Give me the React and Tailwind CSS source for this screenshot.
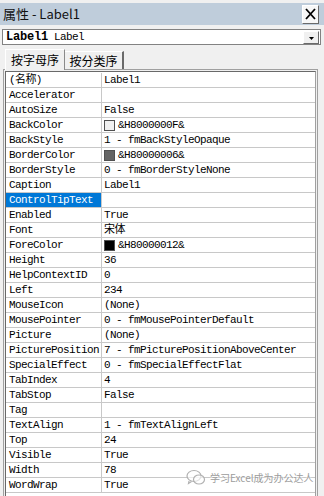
import React from 'react';

const mono = { fontFamily: '"Liberation Mono", "Noto Sans CJK SC", monospace' };

const rows = [
    { name: '(名称)', value: 'Label1' },
    { name: 'Accelerator', value: '' },
    { name: 'AutoSize', value: 'False' },
    { name: 'BackColor', value: '&H8000000F&', swatch: 'bg-[#f0f0f0]' },
    { name: 'BackStyle', value: '1 - fmBackStyleOpaque' },
    { name: 'BorderColor', value: '&H80000006&', swatch: 'bg-[#646464]' },
    { name: 'BorderStyle', value: '0 - fmBorderStyleNone' },
    { name: 'Caption', value: 'Label1' },
    { name: 'ControlTipText', value: '', selected: true },
    { name: 'Enabled', value: 'True' },
    { name: 'Font', value: '宋体' },
    { name: 'ForeColor', value: '&H80000012&', swatch: 'bg-black' },
    { name: 'Height', value: '36' },
    { name: 'HelpContextID', value: '0' },
    { name: 'Left', value: '234' },
    { name: 'MouseIcon', value: '(None)' },
    { name: 'MousePointer', value: '0 - fmMousePointerDefault' },
    { name: 'Picture', value: '(None)' },
    { name: 'PicturePosition', value: '7 - fmPicturePositionAboveCenter' },
    { name: 'SpecialEffect', value: '0 - fmSpecialEffectFlat' },
    { name: 'TabIndex', value: '4' },
    { name: 'TabStop', value: 'False' },
    { name: 'Tag', value: '' },
    { name: 'TextAlign', value: '1 - fmTextAlignLeft' },
    { name: 'Top', value: '24' },
    { name: 'Visible', value: 'True' },
    { name: 'Width', value: '78' },
    { name: 'WordWrap', value: 'True' },
];

const PropRow = ({ row }) => (
    <div className="flex h-[15px] border-b border-[#c8c8c8] text-[11px] leading-[14px] tracking-[-0.6px] text-black" style={mono}>
        <div className={`w-[95px] shrink-0 pl-[3px] whitespace-nowrap overflow-hidden ${row.selected ? 'bg-[#0078d7] text-white' : ''}`}>
            {row.name}
        </div>
        <div className="w-px shrink-0 bg-[#c8c8c8]" />
        <div className="flex-1 flex items-center pl-[2px] whitespace-nowrap overflow-hidden">
            {row.swatch && (
                <span className={`w-[11px] h-[11px] mr-[3px] shrink-0 border border-[#505050] ${row.swatch}`} />
            )}
            <span>{row.value}</span>
        </div>
    </div>
);

export default function App() {
    return (
        <div className="relative w-[324px] h-[496px] bg-[#f0f0f0] overflow-hidden select-none">
            <div className="h-[3px]" />
            {/* title bar */}
            <div className="h-[22px] bg-[#bfcddb] flex items-center justify-between pl-[3px] pr-[5px]">
                <span className="text-[13px] text-[#111]" style={{ fontFamily: '"Noto Sans CJK SC", sans-serif' }}>
                    属性 - Label1
                </span>
                <div className="w-[17px] h-[19px] bg-[#f7f7f7] border border-t-white border-l-white border-r-[#6a6a6a] border-b-[#6a6a6a] flex items-center justify-center">
                    <svg width="11" height="12" viewBox="0 0 11 12">
                        <path d="M1 1 L10 11 M10 1 L1 11" stroke="#000" strokeWidth="1.8" />
                    </svg>
                </div>
            </div>
            <div className="h-[4px]" />
            {/* combo */}
            <div className="ml-[2px] mr-[3px] h-[16px] bg-white border border-[#828282] flex items-center justify-between">
                <span className="pl-[3px] text-[11px] leading-[14px] tracking-[-0.6px] text-black whitespace-nowrap" style={mono}>
                    <b className="font-bold text-[12px] tracking-[-0.2px]">Label1</b> Label
                </span>
                <div className="w-[16px] h-[13px] mr-[1px] bg-[#f0f0f0] border border-t-white border-l-white border-r-[#6a6a6a] border-b-[#6a6a6a] flex items-end justify-center pb-[3px]">
                    <svg width="5" height="3" viewBox="0 0 5 3">
                        <path d="M0 0 H5 L2.5 3 Z" fill="#000" />
                    </svg>
                </div>
            </div>
            <div className="h-[3px]" />
            {/* tabs */}
            <div className="h-[21px] pl-[5px] flex items-end" style={{ fontFamily: '"Noto Sans CJK SC", sans-serif' }}>
                <div className="h-[21px] w-[60px] border-l border-t border-r border-l-white border-t-white border-r-[#8a8a8a] flex items-center justify-center text-[12px] text-black relative top-px bg-[#f0f0f0] z-10">
                    按字母序
                </div>
                <div className="h-[18px] w-[59px] border-t border-r-2 border-t-white border-r-[#6a6a6a] flex items-center justify-center text-[12px] text-black">
                    按分类序
                </div>
            </div>
            {/* grid panel */}
            <div className="ml-[3px] w-[315px] border border-[#a0a0a0] p-px h-[430px]">
                <div className="h-full border-l border-t border-[#696969] border-r border-r-[#a0a0a0] bg-white pt-px">
                    {rows.map((row, i) => (
                        <PropRow key={i} row={row} />
                    ))}
                </div>
            </div>
            {/* watermark */}
            <div className="absolute left-[186px] top-[469px] flex items-center gap-[4px] text-[10px] leading-[14px] text-[#9c9c9c] whitespace-nowrap" style={{ fontFamily: '"Noto Sans CJK SC", sans-serif', textShadow: '0 0 2px #fff, 0 0 2px #fff' }}>
                <svg width="20" height="17" viewBox="0 0 20 17" fill="none" stroke="#b0b0b0" strokeWidth="1.2">
                    <ellipse cx="8" cy="7" rx="7" ry="5.5" fill="#fff" fillOpacity="0.6" />
                    <ellipse cx="13" cy="10.5" rx="5.5" ry="4.5" fill="#fff" fillOpacity="0.6" />
                    <path d="M3 12 L2.5 14.5 L5.5 12.5" />
                </svg>
                <span>学习Excel成为办公达人</span>
            </div>
        </div>
    );
}
